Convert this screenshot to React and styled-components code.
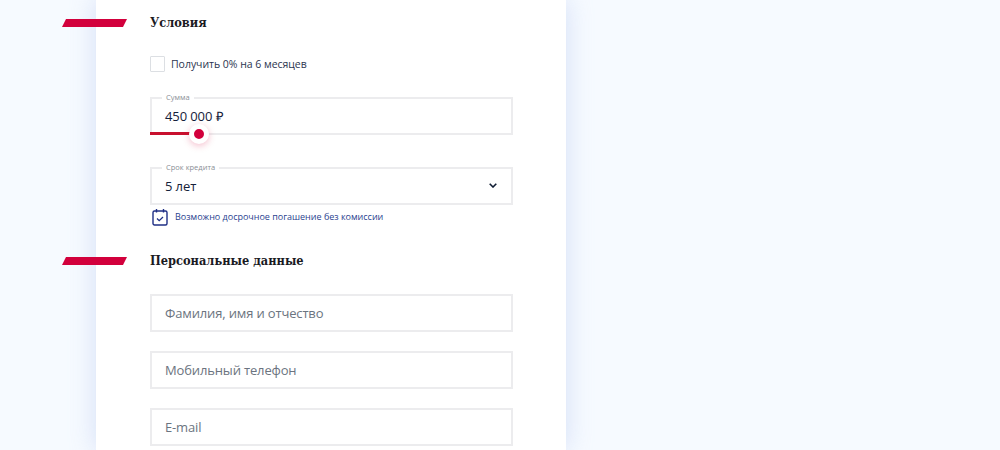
import styled, { createGlobalStyle } from 'styled-components'

const GlobalStyle = createGlobalStyle`
  html, body {
    margin: 0;
    height: 450px;
    overflow: hidden;
    background: #f6faff;
    font-family: "Open Sans", "Liberation Sans", sans-serif;
  }
`

export default function App() {
    return (
        <Page>
            <GlobalStyle />
            <Card>
                <Heading>Условия</Heading>
                <CheckRow>
                    <Checkbox />
                    <CheckLabel>Получить 0% на 6 месяцев</CheckLabel>
                </CheckRow>

                <Field $top={25}>
                    <FloatLabel>Сумма</FloatLabel>
                    <Value>450 000 ₽</Value>
                    <Track />
                    <Thumb />
                </Field>

                <Field $top={32}>
                    <FloatLabel>Срок кредита</FloatLabel>
                    <Value>5 лет</Value>
                    <Chevron viewBox="0 0 8 5">
                        <path d="M0.7 0.8 L4 4 L7.3 0.8" fill="none" stroke="#0f1c33" strokeWidth="1.6" />
                    </Chevron>
                </Field>

                <Hint>
                    <svg width="16" height="18" viewBox="0 0 16 18" fill="none" stroke="#1f2f85">
                        <rect x="1" y="3" width="14" height="14" rx="1.5" strokeWidth="1.4" />
                        <path d="M4.5 1v3.5M11.5 1v3.5" strokeWidth="1.4" />
                        <path d="M5 10.5l2.2 2.2L11 9" strokeWidth="1.3" />
                    </svg>
                    <HintText>Возможно досрочное погашение без комиссии</HintText>
                </Hint>

                <Heading $second>Персональные данные</Heading>
                <Field $top={23}><Placeholder>Фамилия, имя и отчество</Placeholder></Field>
                <Field $top={19}><Placeholder>Мобильный телефон</Placeholder></Field>
                <Field $top={19}><Placeholder>E-mail</Placeholder></Field>
            </Card>
        </Page>
    )
}

const Page = styled.div`
  height: 450px;
  padding-left: 96px;
  overflow: hidden;
`

const Card = styled.div`
  width: 470px;
  height: 450px;
  box-sizing: border-box;
  padding: 13px 53px 0 54px;
  background: #fff;
  box-shadow: 0 0 24px rgba(170, 190, 235, 0.45);
`

const Heading = styled.h2`
  position: relative;
  margin: ${p => (p.$second ? '25px' : '0')} 0 0;
  font: 600 12.7px/20px "DejaVu Serif Condensed", "DejaVu Serif", serif;
  color: #1a1a1f;

  &::before {
    content: "";
    position: absolute;
    left: -88px;
    top: 6px;
    width: 65px;
    height: 8px;
    background: #d2003c;
    clip-path: polygon(4px 0, 100% 0, 61px 100%, 0 100%);
  }
`

const CheckRow = styled.div`
  display: flex;
  align-items: center;
  gap: 6px;
  margin-top: 23px;
`

const Checkbox = styled.span`
  width: 15px;
  height: 16px;
  box-sizing: border-box;
  border: 1px solid #dcdfe3;
  border-radius: 1px;
`

const CheckLabel = styled.span`
  font-size: 10.5px;
  line-height: 16px;
  letter-spacing: -0.03px;
  color: #2b3550;
`

const Field = styled.div`
  position: relative;
  display: flex;
  align-items: center;
  height: 38px;
  box-sizing: border-box;
  margin-top: ${p => p.$top}px;
  padding: 0 13px;
  border: 2px solid #ececee;
  background: #fff;
`

const FloatLabel = styled.span`
  position: absolute;
  left: 10px;
  top: -7px;
  padding: 0 4px;
  font-size: 7.5px;
  line-height: 10px;
  color: #8a8f96;
  background: #fff;
`

const Value = styled.span`
  font-size: 13px;
  letter-spacing: -0.1px;
  color: #15213a;
`

const Placeholder = styled.span`
  font-size: 13px;
  letter-spacing: -0.15px;
  color: #6b7480;
`

const Track = styled.span`
  position: absolute;
  left: -2px;
  bottom: -2px;
  width: 40px;
  height: 3px;
  background: #c8102e;
`

const Thumb = styled.span`
  position: absolute;
  left: 37px;
  bottom: -11px;
  width: 10px;
  height: 10px;
  border: 5px solid #fff;
  border-radius: 50%;
  background: #d2003c;
  box-shadow: 0 2px 7px rgba(210, 0, 60, 0.25);
`

const Chevron = styled.svg`
  position: absolute;
  right: 14px;
  top: 14px;
  width: 8px;
  height: 5px;
`

const Hint = styled.div`
  display: flex;
  align-items: center;
  gap: 7px;
  margin: 3px 0 0 2px;
`

const HintText = styled.span`
  font-size: 9px;
  line-height: 18px;
  letter-spacing: -0.01px;
  color: #2a3f8f;
`
